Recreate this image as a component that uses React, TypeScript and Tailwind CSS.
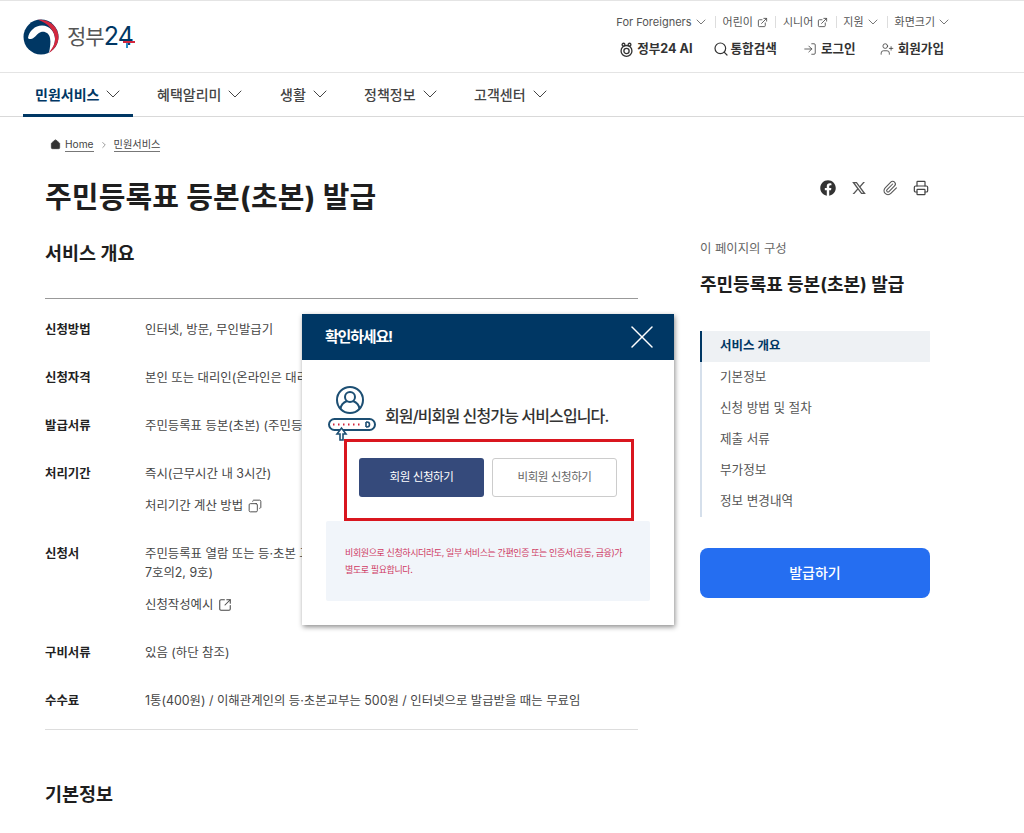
import {
  ChevronDown,
  ChevronRight,
  Copy,
  ExternalLink,
  Home,
  LogIn,
  Paperclip,
  Printer,
  Search,
  SquareArrowOutUpRight,
  UserPlus,
  X,
} from "lucide-react";
import { FaFacebook } from "react-icons/fa";
import { RiTwitterXLine } from "react-icons/ri";

const navItems = [
  { label: "민원서비스", cls: "w-[134px] pl-[12px]" },
  { label: "혜택알리미", cls: "w-[123px]" },
  { label: "생활", cls: "w-[84px]" },
  { label: "정책정보", cls: "w-[110px]" },
  { label: "고객센터", cls: "w-[100px]" },
];

const tocItems = ["기본정보", "신청 방법 및 절차", "제출 서류", "부가정보", "정보 변경내역"];

const Logo = () => (
  <div className="flex items-center gap-[8px]">
    <svg viewBox="0 0 36 36" className="w-[36px] h-[36px]">
      <circle cx="18" cy="18" r="17.500" fill="#003764" />
      <path d="M5 19C6 12 12 6.500 19 6.500 27 6.500 32 13 32 20 32 25 30 30 26 34 27 28 28 23 27 19 26 14 22 12 18 13 15 14 13 17 11 18.500 9 20 6 21 5 19z" fill="#fff" />
      <path d="M15 .8C27 0 36 9 35.500 19 35 25 32 30 26 34 30 28 32.500 24 32 19 31.500 12 25 4 15 .8z" fill="#d3273e" />
    </svg>
    <div className="relative flex items-center text-[21px] leading-none tracking-[-1px] text-[#555]">
      <span>정부</span>
      <span className="text-[25px] text-[#003764] tracking-[-0.8px]">24</span>
      <span className="absolute right-[-2px] top-[17px] w-[12px] h-[2px] bg-[#d3273e]" />
      <span className="absolute right-[5px] top-[19px] w-[2px] h-[5px] bg-[#2a8fc8]" />
    </div>
  </div>
);

const AiIcon = () => (
  <svg viewBox="0 0 16 16" className="w-[15px] h-[15px]" fill="none" stroke="#333" strokeWidth="1.4">
    <circle cx="4.800" cy="2.800" r="1.500" />
    <circle cx="11.200" cy="2.800" r="1.500" />
    <circle cx="8" cy="9.500" r="5.800" />
    <circle cx="8" cy="9.500" r="2.800" />
  </svg>
);

const Divider = () => <span className="w-px h-[12px] bg-[#ddd]" />;

const Utility = () => (
  <div className="flex items-center gap-[6.5px] -mr-[3px] text-[11px] leading-[16px] text-[#555]">
    <span className="flex items-center gap-[1px]">For Foreigners <ChevronDown className="w-[16px] h-[16px]" strokeWidth={1.2} /></span>
    <Divider />
    <span className="flex items-center gap-[4px] mr-[1px]">어린이 <ExternalLink className="w-[11px] h-[11px]" /></span>
    <Divider />
    <span className="flex items-center gap-[4px] mr-[1px]">시니어 <ExternalLink className="w-[11px] h-[11px]" /></span>
    <Divider />
    <span className="flex items-center gap-[1px]">지원 <ChevronDown className="w-[16px] h-[16px]" strokeWidth={1.2} /></span>
    <Divider />
    <span className="flex items-center gap-[1px]">화면크기 <ChevronDown className="w-[16px] h-[16px]" strokeWidth={1.2} /></span>
  </div>
);

const Header = () => (
  <header className="h-[73px] border-t border-b border-[#e4e4e4] pl-[23px] pr-[75px] flex items-center justify-between">
    <Logo />
    <div className="flex flex-col items-end gap-[10px] pb-[1px]">
      <Utility />
      <div className="flex items-center text-[12.6px] leading-[18px] font-bold text-[#333] pr-[5px]">
        <span className="flex items-center gap-[3px] mr-[20px]"><AiIcon /> 정부24 AI</span>
        <span className="flex items-center gap-[2px] mr-[26px]"><Search className="w-[16px] h-[16px]" strokeWidth={1.8} /> 통합검색</span>
        <span className="flex items-center gap-[4px] mr-[24px]"><LogIn className="w-[14px] h-[14px]" strokeWidth={1.3} /> 로그인</span>
        <span className="flex items-center gap-[4px]"><UserPlus className="w-[14px] h-[14px]" strokeWidth={1.3} /> 회원가입</span>
      </div>
    </div>
  </header>
);

const Nav = () => (
  <nav className="h-[44px] border-b border-[#d9d9d9] pl-[23px] flex">
    {navItems.map((item, index) => (
      <div key={item.label} className={`relative flex items-center pb-[1px] ${item.cls} text-[14px] font-medium text-[#444]`}>
        <span className={index === 0 ? "text-[#003764] font-bold" : ""}>{item.label}</span>
        <ChevronDown className="w-[24px] h-[24px] ml-[2px]" strokeWidth={1} />
        {index === 0 && <span className="absolute left-0 bottom-[-1px] w-[110px] h-[3px] bg-[#003764]" />}
      </div>
    ))}
  </nav>
);

const Row = ({ label, children }: { label: string; children: React.ReactNode }) => (
  <div className="flex text-[12.4px] leading-[19px]">
    <div className="w-[100px] shrink-0 font-bold text-[#222]">{label}</div>
    <div className="flex-1 text-[#464646]">{children}</div>
  </div>
);

const Overview = () => (
  <div className="w-[593px]">
    <h2 className="text-[18.5px] leading-[28px] font-bold text-[#1e1e1e]">서비스 개요</h2>
    <div className="mt-[31px] pt-[21px] border-t border-[#999] flex flex-col gap-[29px] pb-[19px]">
      <Row label="신청방법">인터넷, 방문, 무인발급기</Row>
      <Row label="신청자격">본인 또는 대리인(온라인은 대리 신청 불가)</Row>
      <Row label="발급서류">주민등록표 등본(초본) (주민등록표 등본 또는 초본)</Row>
      <Row label="처리기간">
        <div>즉시(근무시간 내 3시간)</div>
        <div className="mt-[13px] flex items-center gap-[5px]">처리기간 계산 방법 <Copy className="w-[14px] h-[14px] -scale-x-100" strokeWidth={1.6} /></div>
      </Row>
      <Row label="신청서">
        <div>주민등록표 열람 또는 등·초본 교부 신청서(주민등록법 시행규칙 별지 제<br />7호의2, 9호)</div>
        <div className="mt-[13px] flex items-center gap-[5px]">신청작성예시 <SquareArrowOutUpRight className="w-[14px] h-[14px]" strokeWidth={1.8} /></div>
      </Row>
      <Row label="구비서류">있음 (하단 참조)</Row>
      <Row label="수수료">1통(400원) / 이해관계인의 등·초본교부는 500원 / 인터넷으로 발급받을 때는 무료임</Row>
    </div>
    <div className="border-t border-[#ddd]" />
    <h2 className="mt-[50px] text-[18.5px] leading-[28px] font-bold text-[#1e1e1e]">기본정보</h2>
  </div>
);

const Sidebar = () => (
  <aside className="w-[230px] ml-[62px] pt-[1px] shrink-0">
    <div className="text-[12.4px] leading-[18px] text-[#666]">이 페이지의 구성</div>
    <div className="mt-[14px] text-[18px] leading-[26px] font-bold text-[#1e1e1e]">주민등록표 등본(초본) 발급</div>
    <div className="mt-[33px] border-l-2 border-[#d5dfeb]">
      <div className="-ml-[2px] h-[31px] border-l-2 border-[#003764] bg-[#eef1f4] pl-[18px] flex items-center text-[12.5px] font-bold text-[#003764]">서비스 개요</div>
      {tocItems.map((item) => (
        <div key={item} className="h-[31px] pl-[18px] flex items-center text-[12.6px] text-[#555]">{item}</div>
      ))}
    </div>
    <button className="mt-[31px] w-full h-[50px] pb-[2px] rounded-[8px] bg-[#256ef1] text-white text-[14px] font-medium">발급하기</button>
  </aside>
);

const MemberIcon = () => (
  <svg viewBox="0 0 48 55" className="w-[48px] h-[55px] shrink-0 -mb-[2px]" fill="none" stroke="#1d4f73" strokeWidth="2">
    <circle cx="22" cy="14" r="13" />
    <circle cx="22" cy="11" r="5" />
    <path d="M12.500 23c.5-5 4-7 6.500-8M31.500 23c-.5-5-4-7-6.500-8" />
    <rect x="1" y="33" width="46" height="11" rx="5.500" fill="#fff" />
    <path d="M5 38.500h1.500M10 38.500h1.500M15 38.500h1.500M20 38.500h1.500M25 38.500h1.500M30 38.500h1.500" stroke="#d3273e" strokeWidth="2.200" />
    <path d="M38 36v5M38 36h1a2.500 2.500 0 0 1 0 5h-1" strokeWidth="1.600" />
    <path d="M12 54v-6H9l4.500-6 4.500 6h-3v6z" fill="#fff" strokeWidth="1.600" />
  </svg>
);

const Modal = () => (
  <div className="absolute left-[302px] top-[314px] w-[372px] h-[311px] bg-white shadow-[1px_2px_5px_rgba(0,0,0,0.45)]">
    <div className="h-[46px] bg-[#003764] flex items-center justify-between pl-[23px] pr-[12px]">
      <span className="text-[15px] font-bold tracking-[-1.2px] text-white">확인하세요!</span>
      <X className="w-[40px] h-[40px] text-white" strokeWidth={0.9} />
    </div>
    <div className="h-[52px] mt-[27px] ml-[26px] flex items-end">
      <MemberIcon />
      <span className="ml-[9px] mb-[11px] text-[16px] font-medium tracking-[-0.88px] leading-[24px] text-[#333]">회원/비회원 신청가능 서비스입니다.</span>
    </div>
    <div className="ml-[42px] w-[290px] h-[82px] border-[3px] border-[#d9161f] pt-[16px] pl-[12px] flex gap-[8px]">
      <button className="w-[125px] h-[39px] rounded-[3px] bg-[#354a7b] text-white text-[11.5px] tracking-[-0.4px]">회원 신청하기</button>
      <button className="w-[125px] h-[39px] rounded-[3px] border border-[#ccc] bg-white text-[#666] text-[11.5px] tracking-[-0.4px]">비회원 신청하기</button>
    </div>
    <div className="mx-[24px] h-[80px] rounded-[2px] bg-[#f1f5fa] px-[19px] pt-[23px] text-[9px] leading-[17px] tracking-[-0.4px] text-[#cf3a63]">
      비회원으로 신청하시더라도, 일부 서비스는 간편인증 또는 인증서(공동, 금융)가<br />별도로 필요합니다.
    </div>
  </div>
);

export default function App() {
  return (
    <div className="relative h-[833px] overflow-hidden bg-white font-['Inter','Noto_Sans_CJK_KR',sans-serif]">
      <Header />
      <Nav />
      <main className="px-[45px]">
        <div className="pt-[20px] flex items-center text-[10.2px] leading-[20px] text-[#444] pl-[5px]">
          <Home className="w-[11px] h-[11px] mr-[4px] fill-[#333]" />
          <span className="border-b border-[#777] leading-[14px]">Home</span>
          <ChevronRight className="w-[10px] h-[10px] mx-[5px] text-[#888]" />
          <span className="border-b border-[#777] leading-[14px]">민원서비스</span>
        </div>
        <div className="mt-[26px] w-[885px] flex items-start justify-between">
          <h1 className="text-[29px] leading-[40px] font-bold tracking-[0.15px] text-[#1e1e1e]">주민등록표 등본(초본) 발급</h1>
          <div className="flex items-center gap-[15px] pt-[2px] pr-[1px] text-[#444]">
            <FaFacebook className="w-[16px] h-[16px] text-[#333]" />
            <RiTwitterXLine className="w-[16px] h-[16px] text-[#555]" />
            <Paperclip className="w-[16px] h-[16px] text-[#555]" strokeWidth={1.6} />
            <Printer className="w-[16px] h-[16px]" strokeWidth={1.8} />
          </div>
        </div>
        <div className="mt-[21px] flex items-start">
          <Overview />
          <Sidebar />
        </div>
      </main>
      <Modal />
    </div>
  );
}
